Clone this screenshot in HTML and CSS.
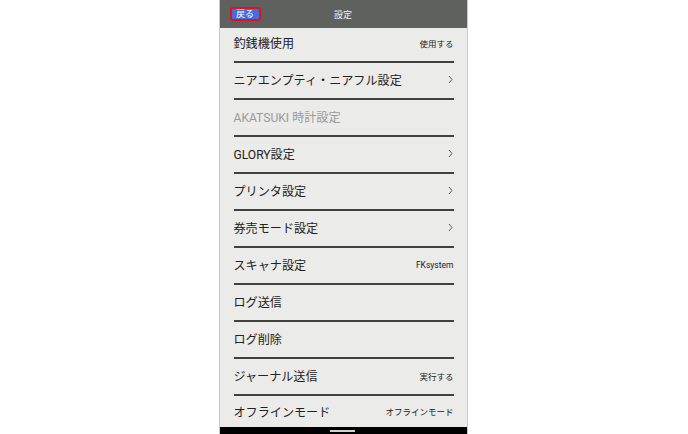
FILE: index.html
```html
<!DOCTYPE html>
<html lang="ja">
<head>
<meta charset="utf-8">
<link rel="stylesheet" href="styles.css">
</head>
<body>
<div class="screen">
  <div class="header">
    <div class="back">戻る</div>
    <div class="title">設定</div>
  </div>
  <div class="list">
    <div class="row"><span class="label">釣銭機使用</span><span class="value">使用する</span></div>
    <div class="row"><span class="label">ニアエンプティ・ニアフル設定</span><svg class="chev" width="5" height="9" viewBox="0 0 5 9"><polyline points="1,1 4,4.5 1,8" /></svg></div>
    <div class="row"><span class="label disabled">AKATSUKI 時計設定</span></div>
    <div class="row"><span class="label">GLORY設定</span><svg class="chev" width="5" height="9" viewBox="0 0 5 9"><polyline points="1,1 4,4.5 1,8" /></svg></div>
    <div class="row"><span class="label">プリンタ設定</span><svg class="chev" width="5" height="9" viewBox="0 0 5 9"><polyline points="1,1 4,4.5 1,8" /></svg></div>
    <div class="row"><span class="label">券売モード設定</span><svg class="chev" width="5" height="9" viewBox="0 0 5 9"><polyline points="1,1 4,4.5 1,8" /></svg></div>
    <div class="row"><span class="label">スキャナ設定</span><span class="value">FKsystem</span></div>
    <div class="row"><span class="label">ログ送信</span></div>
    <div class="row"><span class="label">ログ削除</span></div>
    <div class="row"><span class="label">ジャーナル送信</span><span class="value">実行する</span></div>
    <div class="row"><span class="label">オフラインモード</span><span class="value">オフラインモード</span></div>
  </div>
  <div class="navbar"><div class="home"></div></div>
</div>
</body>
</html>
```
FILE: styles.css
```css
html, body {
  margin: 0;
  padding: 0;
  background: #ffffff;
}
body {
  font-family: Roboto, "Noto Sans CJK JP", sans-serif;
}
.screen {
  width: 247px;
  height: 434px;
  margin: 0 auto;
  background: #ebebe9;
  border-left: 1px solid #c9c9c9;
  border-right: 1px solid #c9c9c9;
  display: flex;
  flex-direction: column;
  position: relative;
  left: -1px;
}
.header {
  height: 28px;
  background: #5f615e;
  display: flex;
  align-items: center;
  position: relative;
  flex: none;
}
.back {
  margin-left: 10px;
  width: 27px;
  height: 10px;
  background: #4170de;
  border: 2px solid #e1121b;
  border-radius: 3px;
  color: #ffffff;
  font-size: 9px;
  line-height: 10px;
  text-align: center;
}
.title {
  position: absolute;
  left: 0;
  right: 0;
  top: 1px;
  height: 28px;
  line-height: 28px;
  text-align: center;
  color: #f0f0f0;
  font-size: 9px;
  pointer-events: none;
}
.list {
  flex: 1;
  padding: 0 13px 0 14px;
  display: flex;
  flex-direction: column;
}
.row {
  box-sizing: border-box;
  height: 37px;
  padding-bottom: 2px;
  border-bottom: 2px solid #404040;
  display: flex;
  align-items: center;
  justify-content: space-between;
  flex: none;
}
.row:first-child {
  height: 35px;
  padding-bottom: 4px;
}
.row:last-child {
  border-bottom: none;
  height: 31px;
  padding-bottom: 1px;
}
.label {
  font-size: 12.1px;
  color: #222222;
}
.label.disabled {
  color: #9a9a9a;
}
.value {
  font-size: 8.5px;
  color: #222222;
}
.chev {
  margin-right: 1px;
}
.chev polyline {
  fill: none;
  stroke: #5a5a5a;
  stroke-width: 1;
}
.navbar {
  height: 7px;
  background: #000000;
  flex: none;
  display: flex;
  align-items: center;
  justify-content: center;
}
.home {
  width: 25px;
  height: 2px;
  background: #d0d0d0;
  margin-left: -2px;
}
```
